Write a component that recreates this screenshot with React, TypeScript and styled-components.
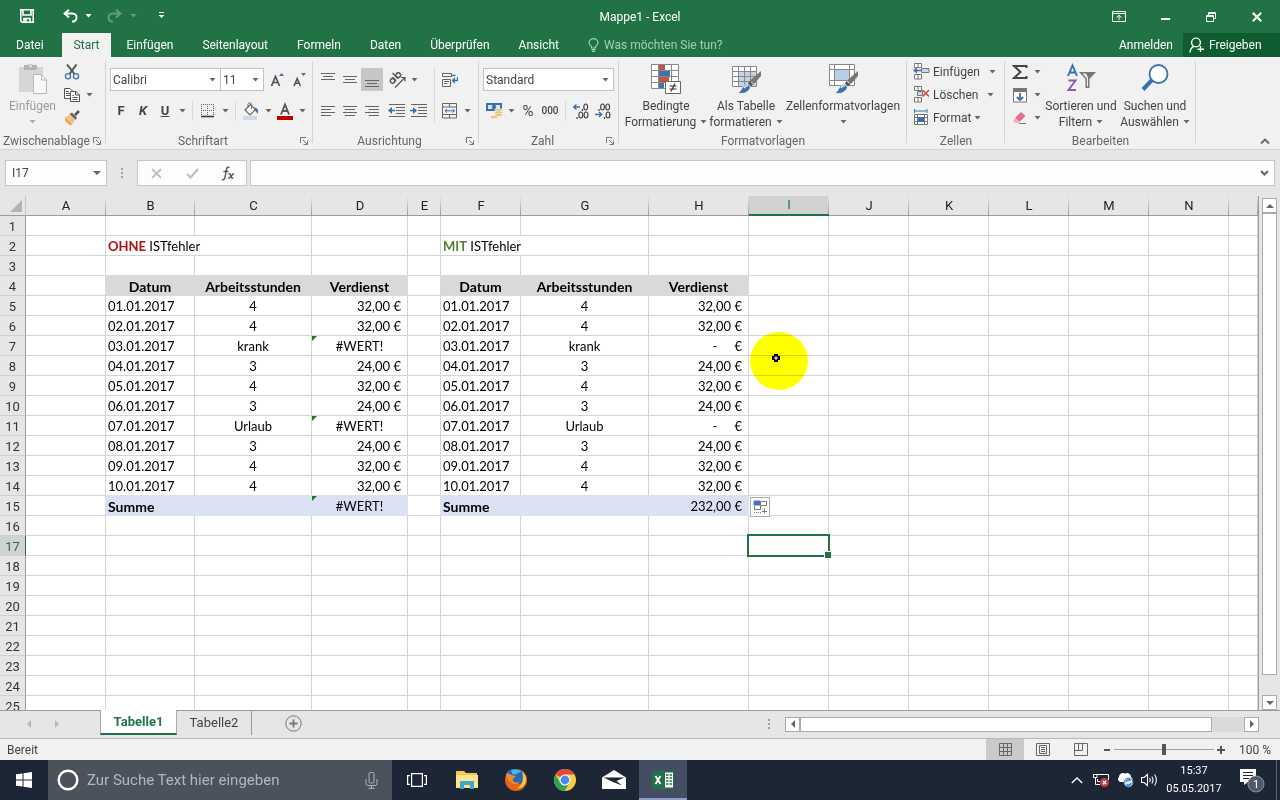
import React from "react";
import styled, { createGlobalStyle, css } from "styled-components";

const UI = 'Roboto, "Noto Sans", sans-serif';
const CELL = 'Lato, "Open Sans", sans-serif';

const Global = createGlobalStyle`
  * { box-sizing: border-box; }
  body { margin: 0; font-family: ${UI}; font-size: 12px; line-height: 16px; color: #444; }
  button, input, select { font: inherit; color: inherit; }
  button { background: none; border: 0; padding: 0; margin: 0; }
  svg { display: block; flex: none; }
`;

const App_ = styled.div`
  display: flex;
  flex-direction: column;
  height: 100vh;
  min-width: 1200px;
  overflow: hidden;
  background: #e6e6e6;
`;

/* ---------- title bar and tabs ---------- */

const TitleBar = styled.header`
  display: grid;
  grid-template-columns: 1fr auto 1fr;
  align-items: center;
  height: 33px;
  flex: none;
  background: #217346;
  color: #fff;
`;
const Title = styled.h1`
  margin: 0;
  font-size: 12px;
  font-weight: 400;
`;
const QuickAccess = styled.div`
  display: flex;
  align-items: center;
  padding: 0 0 2px 16px;
`;
const QuickButton = styled.button<{ $w: number; $dim?: boolean }>`
  display: flex;
  justify-content: center;
  align-items: center;
  width: ${(p) => p.$w}px;
  height: 22px;
  opacity: ${(p) => (p.$dim ? 0.3 : 1)};
`;
const WindowButtons = styled.div`
  display: flex;
  justify-content: flex-end;
`;
const WindowButton = styled.button`
  display: flex;
  align-items: center;
  justify-content: center;
  width: 46px;
  height: 30px;
`;
const TabBar = styled.nav`
  display: flex;
  height: 24px;
  flex: none;
  background: #217346;
  color: #fff;
`;
const Tab = styled.button<{ $active?: boolean; $first?: boolean }>`
  padding: ${(p) => (p.$active ? "0 12px" : "0 14px")};
  margin-right: ${(p) => (p.$first ? 4 : 1)}px;
  ${(p) => p.$first && css`padding-left: 16px;`}
  ${(p) => p.$active && css`background: #f1f1f1; color: #217346;`}
`;
const TellMe = styled.button`
  display: flex;
  align-items: center;
  gap: 5px;
  padding-left: 14px;
  color: #a2cfb4;
`;
const SignIn = styled.button`
  margin-left: auto;
  padding: 0 10px;
`;
const Share = styled.button`
  display: flex;
  align-items: center;
  gap: 4px;
  width: 97px;
  padding-left: 6px;
  background: #0e5c2f;
`;

/* ---------- ribbon ---------- */

const Ribbon = styled.section`
  display: flex;
  height: 93px;
  flex: none;
  background: #f1f1f1;
  border-bottom: 1px solid #d2d2d2;
`;
const GroupBox = styled.div<{ $w: number }>`
  position: relative;
  display: flex;
  flex-direction: column;
  width: ${(p) => p.$w}px;
  &::after {
    content: "";
    position: absolute;
    right: 0;
    top: 4px;
    bottom: 6px;
    width: 1px;
    background: #d4d4d4;
  }
`;
const GroupBody = styled.div<{ $tall?: boolean }>`
  display: flex;
  height: 76px;
  padding: ${(p) => (p.$tall ? "3px 4px 0" : "11px 4px 0")};
`;
const GroupFooter = styled.div`
  display: flex;
  align-items: center;
  height: 16px;
  color: #666;
`;
const GroupName = styled.span`
  flex: 1;
  text-align: center;
  white-space: nowrap;
`;
const Launcher = styled.button`
  width: 13px;
  display: flex;
  justify-content: flex-start;
`;
const Stack = styled.div`
  display: flex;
  flex-direction: column;
  gap: 8px;
`;
const Row = styled.div`
  display: flex;
  align-items: center;
  height: 23px;
`;
const Gap = styled.span<{ $w: number }>`
  width: ${(p) => p.$w}px;
`;
const IconButton = styled.button<{ $w?: number; $active?: boolean }>`
  display: flex;
  align-items: center;
  justify-content: center;
  width: ${(p) => p.$w ?? 22}px;
  height: 23px;
  flex: none;
  background: ${(p) => (p.$active ? "#c6c6c6" : "none")};
`;
const Rule = styled.span<{ $h: number }>`
  width: 1px;
  height: ${(p) => p.$h}px;
  margin: 0 4px;
  background: #d9d9d9;
`;
const Glyph = styled.span<{ $size?: number; $italic?: boolean; $line?: boolean; $weight?: number }>`
  font-size: ${(p) => p.$size ?? 13}px;
  line-height: 18px;
  font-weight: ${(p) => p.$weight ?? 700};
  font-style: ${(p) => (p.$italic ? "italic" : "normal")};
  text-decoration: ${(p) => (p.$line ? "underline" : "none")};
  color: #444;
`;
const Combo = styled.label<{ $w: number }>`
  position: relative;
  display: flex;
  align-items: center;
  width: ${(p) => p.$w}px;
  height: 23px;
  background: #fff;
  border: 1px solid #c3c3c3;
  & + & { border-left: 0; }
  svg { position: absolute; right: 4px; pointer-events: none; }
`;
const Select = styled.select`
  appearance: none;
  width: 100%;
  height: 21px;
  padding: 0 2px;
  border: 0;
  background: none;
`;
const BigButton = styled.button<{ $w: number; $dim?: boolean }>`
  display: flex;
  flex-direction: column;
  align-items: center;
  width: ${(p) => p.$w}px;
  height: 70px;
  padding-top: 3px;
  white-space: nowrap;
  opacity: ${(p) => (p.$dim ? 0.5 : 1)};
  > svg:first-child { margin-bottom: 3px; }
`;
const BigLine = styled.span`
  display: flex;
  align-items: center;
  gap: 4px;
  height: 16px;
`;
const SmallStack = styled.div`
  display: flex;
  flex-direction: column;
`;
const CommandButton = styled.button<{ $gap?: number }>`
  display: flex;
  align-items: center;
  height: 23px;
  gap: 3px;
  > svg:last-child { margin-left: ${(p) => p.$gap ?? 0}px; }
`;
const Collapse = styled.button`
  align-self: flex-end;
  margin-left: auto;
  padding: 0 10px 4px;
`;

/* ---------- formula bar ---------- */

const FormulaBar = styled.section`
  display: flex;
  align-items: center;
  height: 46px;
  padding: 0 5px;
  flex: none;
`;
const Field = styled.label<{ $w?: number }>`
  display: flex;
  align-items: center;
  height: 26px;
  padding-right: 5px;
  background: #fdfdfd;
  border: 1px solid #c6c6c6;
  ${(p) => (p.$w ? css`width: ${p.$w}px;` : css`flex: 1;`)}
`;
const FieldInput = styled.input`
  flex: 1;
  min-width: 0;
  height: 24px;
  padding: 0 6px;
  border: 0;
  outline: 0;
  background: none;
`;
const FormulaTools = styled.div`
  display: flex;
  width: 110px;
  height: 26px;
  margin-right: 3px;
  background: #fdfdfd;
  border: 1px solid #c6c6c6;
`;
const FormulaTool = styled.button`
  display: flex;
  flex: 1;
  align-items: center;
  justify-content: center;
`;
const Dots = styled.span<{ $w: number }>`
  display: flex;
  justify-content: center;
  width: ${(p) => p.$w}px;
`;

/* ---------- sheet ---------- */

const Work = styled.main`
  display: flex;
  flex: 1;
  min-height: 0;
`;
const SheetView = styled.div`
  position: relative;
  flex: 1;
  min-width: 0;
  overflow: hidden;
  background: #fff;
  border-right: 1px solid #9b9b9b;
`;
const Sheet = styled.table`
  width: 100%;
  table-layout: fixed;
  border-collapse: separate;
  border-spacing: 0;
  font-family: ${CELL};
  font-size: 13px;
  line-height: 17px;
  color: #000;
`;
const Corner = styled.th`
  height: 20px;
  padding: 0;
  background: #e6e6e6;
  border-right: 1px solid #c4c4c4;
  border-bottom: 1px solid #9b9b9b;
  svg { margin-left: auto; margin-right: 3px; }
`;
const ColHead = styled.th<{ $sel?: boolean }>`
  height: 20px;
  padding: 0;
  font-family: ${UI};
  font-size: 13px;
  font-weight: 400;
  line-height: 18px;
  color: ${(p) => (p.$sel ? "#217346" : "#222")};
  background: linear-gradient(#e6e6e6, #9b9b9b) right / 1px 100% no-repeat ${(p) => (p.$sel ? "#d2d2d2" : "#e6e6e6")};
  border-bottom: ${(p) => (p.$sel ? "2px solid #217346" : "1px solid #9b9b9b")};
`;
const RowHead = styled.th<{ $sel?: boolean }>`
  height: 20px;
  padding: 2px 0 0;
  font-family: ${UI};
  font-size: 13px;
  font-weight: 400;
  line-height: 17px;
  color: ${(p) => (p.$sel ? "#217346" : "#333")};
  background: ${(p) => (p.$sel ? "#d2d2d2" : "#e6e6e6")};
  border-right: 1px solid ${(p) => (p.$sel ? "#217346" : "#9b9b9b")};
  border-bottom: 1px solid #cfcfcf;
`;
const Cell = styled.td<{ $align?: string; $fill?: string; $bold?: boolean }>`
  position: relative;
  height: 20px;
  padding: 2px ${(p) => (p.$align === "right" ? 6 : 2)}px 0 2px;
  text-align: ${(p) => p.$align ?? "left"};
  font-weight: ${(p) => (p.$bold ? 700 : 400)};
  font-size: ${(p) => (p.$bold ? 14 : 13)}px;
  white-space: pre;
  border-right: 1px solid #d4d4d4;
  border-bottom: 1px solid #d4d4d4;
  ${(p) => p.$fill && css`
    background: ${p.$fill};
    border-color: ${p.$fill};
    box-shadow: -1px -1px 0 ${p.$fill};
  `}
`;
const Strong = styled.strong<{ $c: string }>`
  color: ${(p) => p.$c};
`;
const ErrorMark = styled.span`
  position: absolute;
  left: 0;
  top: 0;
  border-top: 5px solid #1a7a1a;
  border-right: 5px solid transparent;
`;
const Dash = styled.span`
  margin-right: 17px;
`;
const Selection = styled.span`
  position: absolute;
  z-index: 2;
  inset: -2px -2px -2px -2px;
  border: 2px solid #217346;
  &::after {
    content: "";
    position: absolute;
    right: -3px;
    bottom: -3px;
    width: 6px;
    height: 6px;
    background: #217346;
    border: solid #fff;
    border-width: 1px 0 0 1px;
  }
`;
const PasteTag = styled.button`
  position: absolute;
  z-index: 2;
  left: 1px;
  top: 1px;
  padding: 2px;
  background: #fff;
  border: 1px solid #ababab;
`;
const Spot = styled.span`
  position: absolute;
  z-index: 3;
  left: 750px;
  top: 136px;
  width: 58px;
  height: 58px;
  border-radius: 50%;
  background: #ffff00;
  mix-blend-mode: multiply;
`;
const Pointer = styled.span`
  position: absolute;
  z-index: 4;
  left: 772px;
  top: 158px;
`;

const VScroll = styled.div`
  display: flex;
  flex-direction: column;
  width: 21px;
  padding: 2px 3px 0 3px;
`;
const ScrollButton = styled.button`
  display: flex;
  align-items: center;
  justify-content: center;
  width: 15px;
  height: 15px;
  flex: none;
  background: #fff;
  border: 1px solid #ababab;
`;
const VThumb = styled.div`
  flex: 1;
  margin-bottom: 20px;
  background: #fff;
  border: 1px solid #ababab;
`;

/* ---------- bottom bars ---------- */

const SheetTabs = styled.section`
  display: flex;
  align-items: flex-start;
  height: 29px;
  flex: none;
  border-top: 1px solid #9b9b9b;
  border-bottom: 1px solid #b8b8b8;
`;
const TabArrows = styled.div`
  display: flex;
  align-items: center;
  gap: 20px;
  width: 100px;
  height: 26px;
  padding-left: 25px;
`;
const SheetTab = styled.button<{ $active?: boolean }>`
  height: 24px;
  width: ${(p) => (p.$active ? 77 : 75)}px;
  font-size: 13px;
  ${(p) => p.$active
    ? css`margin-top: -1px; height: 25px; font-weight: 700; color: #217346; background: #fff; border: solid #ababab; border-width: 0 1px 0; border-bottom: 2px solid #217346;`
    : css`border-right: 1px solid #9b9b9b;`}
`;
const AddSheet = styled.button`
  padding: 4px 0 0 33px;
`;
const HScroll = styled.div`
  display: flex;
  align-items: center;
  width: 491px;
  height: 26px;
  margin-left: auto;
  margin-right: 21px;
`;
const HTrack = styled.div`
  display: flex;
  flex: 1;
  height: 15px;
  background: #dadada;
`;
const HThumb = styled.div`
  flex: 1;
  margin-right: 32px;
  background: #fff;
  border: 1px solid #ababab;
`;
const StatusBar = styled.footer`
  display: flex;
  align-items: center;
  height: 21px;
  flex: none;
  padding: 0 9px 0 7px;
  background: #f1f1f1;
`;
const Views = styled.div`
  display: flex;
  margin-left: auto;
`;
const ViewButton = styled.button<{ $active?: boolean }>`
  display: flex;
  align-items: center;
  justify-content: center;
  width: 38px;
  height: 21px;
  background: ${(p) => (p.$active ? "#cacaca" : "none")};
`;
const ZoomStep = styled.button`
  padding: 0 3px;
`;
const ZoomRange = styled.input`
  appearance: none;
  width: 100px;
  height: 12px;
  margin: 0;
  background: linear-gradient(#a0a0a0, #a0a0a0) center / 100% 1px no-repeat;
  &::-webkit-slider-thumb {
    appearance: none;
    width: 4px;
    height: 11px;
    background: #555;
  }
`;
const ZoomValue = styled.span`
  width: 43px;
  text-align: right;
`;

const Taskbar = styled.footer`
  display: flex;
  height: 40px;
  flex: none;
  background: #1c2635;
  color: #fff;
`;
const TaskButton = styled.button<{ $w?: number; $active?: boolean }>`
  display: flex;
  align-items: center;
  justify-content: center;
  width: ${(p) => p.$w ?? 49}px;
  height: 40px;
  ${(p) => p.$active && css`background: #434e63; border-bottom: 2px solid #8e9ccb; padding-top: 2px;`}
`;
const SearchBox = styled.label`
  display: flex;
  align-items: center;
  gap: 7px;
  width: 344px;
  padding: 0 14px 0 8px;
  background: #4c525c;
`;
const SearchInput = styled.input`
  flex: 1;
  min-width: 0;
  padding: 0;
  border: 0;
  outline: 0;
  background: none;
  font-size: 15px;
  line-height: 20px;
  &::placeholder { color: #b3b7bd; opacity: 1; }
`;
const Tray = styled.div`
  display: flex;
  align-items: center;
  margin-left: auto;
`;
const Clock = styled.div`
  width: 66px;
  text-align: center;
  font-size: 11px;
  line-height: 18px;
`;
const ShowDesktop = styled.button`
  width: 4px;
  height: 40px;
  border-left: 1px solid #5c6470;
`;

/* ---------- icons ---------- */

const Caret = ({ c = "#666" }: { c?: string }) => (
  <svg width="7" height="4" viewBox="0 0 7 4"><path d="M0.5 0H6.5L3.5 3.5Z" fill={c} /></svg>
);
const CaretButton = ({ label, w = 12 }: { label: string; w?: number }) => (
  <IconButton $w={w} aria-label={label}><Caret /></IconButton>
);
const Tri = ({ d, c = "#666" }: { d: "up" | "down" | "left" | "right"; c?: string }) => {
  const paths = { up: "M4 2L8 6H0Z", down: "M0 2H8L4 6Z", left: "M6 0V8L2 4Z", right: "M2 0L6 4L2 8Z" };
  return <svg width="8" height="8" viewBox="0 0 8 8"><path d={paths[d]} fill={c} /></svg>;
};
const DotsIcon = () => (
  <svg width="2" height="10" viewBox="0 0 2 10" fill="#a0a0a0"><path d="M0 0h2v2H0zM0 4h2v2H0zM0 8h2v2H0z" /></svg>
);
const LauncherIcon = () => (
  <svg width="8" height="8" viewBox="0 0 8 8" fill="none" stroke="#777"><path d="M0.5 6V0.5H6M3 3L7 7M7.5 3.5V7.5H3.5" /></svg>
);
const Lines = ({ rows }: { rows: [number, number, number][] }) => (
  <svg width="16" height="16" viewBox="0 0 16 16" fill="#666" shapeRendering="crispEdges">
    {rows.map(([x, y, w], i) => <rect key={i} x={x} y={y} width={w} height="1" />)}
  </svg>
);
const AlignV = ({ top }: { top: number }) => <Lines rows={[[1, top, 14], [3, top + 3, 10], [1, top + 6, 14]]} />;
const AlignH = ({ x }: { x: number }) => (
  <Lines rows={[[1, 3, 14], [1 + x, 6, 10], [1, 9, 14], [1 + x, 12, 10]]} />
);
const Indent = ({ out }: { out?: boolean }) => (
  <svg width="18" height="14" viewBox="0 0 18 14" fill="#666">
    <path d="M1 0h16v1H1zM8 3h9v1H8zM8 6h9v1H8zM8 9h9v1H8zM1 12h16v1H1z" />
    <path d={out ? "M0 6.5L4 3V5.7H7V7.3H4V10Z" : "M7 6.5L3 3V5.7H0V7.3H3V10Z"} fill="#3b6fae" />
  </svg>
);
const SaveIcon = () => (
  <svg width="14" height="14" viewBox="0 0 14 14" fill="none" stroke="#fff" strokeWidth="1.6">
    <path d="M.8.8H13.2V13.2H2.2L.8 11.8ZM3 1V6H11V1M4 13V9.5H10V13M6 10V13" />
  </svg>
);
const UndoIcon = ({ flip }: { flip?: boolean }) => (
  <svg width="15" height="14" viewBox="0 0 15 14" fill="none" stroke="#fff" strokeWidth="2">
    <g transform={flip ? "translate(15 0) scale(-1 1)" : undefined}>
      <path d="M6 0.8L1.6 4.6L6 8.4M2 4.6H9.5C12.4 4.6 13.8 6.4 13.5 8.8C13.2 11.2 11.5 12.6 9 12.6" />
    </g>
  </svg>
);
const BulbIcon = () => (
  <svg width="11" height="14" viewBox="0 0 11 14" fill="none" stroke="#a2cfb4" strokeWidth="1.2">
    <path d="M3.5 10V8.6C1.8 7.4 1 6.4 1 4.8C1 2.4 3 .7 5.5.7S10 2.4 10 4.8C10 6.4 9.2 7.4 7.5 8.6V10ZM3.5 11.6H7.5M4 13.3H7" />
  </svg>
);
const PersonIcon = () => (
  <svg width="16" height="16" viewBox="0 0 16 16" fill="none" stroke="#fff" strokeWidth="1.4">
    <circle cx="7" cy="5.5" r="4.4" /><path d="M1 15.5C1.2 12.4 2.6 10.4 4.8 9.4M11.5 9V15M8.5 12.2H15" />
  </svg>
);
const PasteIcon = () => (
  <svg width="30" height="32" viewBox="0 0 30 32">
    <path d="M1 4h24v25H1z" fill="#bdbdc2" /><path d="M6 2h4a3 2.5 0 0 1 5 0h4v5H6z" fill="#777" /><circle cx="12.5" cy="3" r="1.2" fill="#f1f1f1" />
    <path d="M15.5 11.5H23.5L28.5 17V30.5H15.5Z" fill="#fff" stroke="#8a7a84" /><path d="M23.5 11.5V17H28.5" fill="none" stroke="#8a7a84" />
  </svg>
);
const CutIcon = () => (
  <svg width="16" height="16" viewBox="0 0 16 16" fill="none">
    <path d="M3 0.5L10.5 10M12.5 0.5L5.5 10" stroke="#555" strokeWidth="2" />
    <circle cx="4" cy="12.3" r="2.6" stroke="#3b6fae" strokeWidth="1.3" /><circle cx="12" cy="12.3" r="2.6" stroke="#3b6fae" strokeWidth="1.3" />
  </svg>
);
const CopyIcon = () => (
  <svg width="16" height="16" viewBox="0 0 16 16" fill="#fff" stroke="#555">
    <path d="M.5 1.5H6L8.5 4V11.5H.5ZM2 4.5H5M2 6.5H6M2 8.5H6" />
    <path d="M6.5 4.5H12L15.5 8V14.5H6.5ZM11.5 4.5V8H15.5M8.5 8.5H10M8.5 10.5H13.5M8.5 12.5H13.5" />
  </svg>
);
const BrushIcon = () => (
  <svg width="16" height="16" viewBox="0 0 16 16">
    <path d="M1 7L9 14L6 15.5L1 11Z" fill="#e3aa5e" /><path d="M1 7.5L5.5 4.5L11 10L8 14Z" fill="#efc386" />
    <path d="M5.5 4L8 2.5L13 7.5L11.5 10Z" fill="#666" /><path d="M11 5L15 1" stroke="#555" strokeWidth="2.5" />
  </svg>
);
const FontSizeIcon = ({ up }: { up?: boolean }) => (
  <svg width="15" height="16" viewBox="0 0 15 16">
    {up
      ? <><path d="M1.5 14L5.5 4.5L9.5 14M3 10.5H8" fill="none" stroke="#555" strokeWidth="1.7" /><path d="M9 4L11.5 1L14 4Z" fill="#3b6fae" /></>
      : <><path d="M2 14L5.2 6.5L8.4 14M3.3 11.3H7.3" fill="none" stroke="#555" strokeWidth="1.6" /><path d="M9 1H14L11.5 4Z" fill="#3b6fae" /></>}
  </svg>
);
const BorderIcon = () => (
  <svg width="14" height="14" viewBox="0 0 14 14" stroke="#666">
    <path d="M0 .5H13M0 6.5H13M.5 0V13M6.5 0V13M12.5 0V13" strokeDasharray="1 1" /><path d="M0 12.5H13" stroke="#333" strokeWidth="1.5" />
  </svg>
);
const BucketIcon = () => (
  <svg width="18" height="18" viewBox="0 0 18 18">
    <path d="M1 14h14v4H1z" fill="#cfd9ea" /><path d="M3 8L8.5 2.5L13.5 7.5L8 13Z" fill="#fff" stroke="#666" strokeWidth="1.2" />
    <path d="M6 6V2.5a1.7 1.7 0 0 1 3.4 0V7" fill="none" stroke="#666" /><path d="M12 5.5C16 6 17 8.5 15.5 12C14.5 10 14 9 13 8.5Z" fill="#3b6fae" />
  </svg>
);
const FontColorIcon = () => (
  <svg width="16" height="18" viewBox="0 0 16 18">
    <path d="M4 12.5L8 2.5L12 12.5M5.5 9H10.5" fill="none" stroke="#555" strokeWidth="1.8" /><path d="M0 14h16v4H0z" fill="#c00000" />
  </svg>
);
const OrientIcon = () => (
  <svg width="17" height="16" viewBox="0 0 17 16" fill="none" stroke="#555" strokeWidth="1.5">
    <g transform="rotate(-45 5 6)"><circle cx="2" cy="7" r="2.3" /><path d="M4.5 4.5V9.5M7.5 1.5V9.5" /><circle cx="10" cy="7" r="2.3" /></g>
    <path d="M6 15.5L15.5 6M12 5.500H16V9.500" strokeWidth="1.2" />
  </svg>
);
const WrapIcon = () => (
  <svg width="16" height="16" viewBox="0 0 16 16" fill="none" stroke="#666">
    <path d="M.5 1.5H9.5V4.5H.5ZM.5 7.5H8.5V14.5H.5ZM2 9.5H7M2 11.5H5.5" /><path d="M10 3.500H13.500M15.500 5V8.500H10.500M13 6L10.500 8.500L13 11" stroke="#3b6fae" strokeWidth="1.3" />
  </svg>
);
const MergeIcon = () => (
  <svg width="16" height="16" viewBox="0 0 16 16" fill="none" stroke="#666">
    <path d="M.5.5H14.5V15H.5ZM.5 4H14.5M.5 11.5H14.5M7.5.5V4M7.5 11.500V15" /><path d="M3 7.8H12.5M5 6L3 7.8L5 9.6M10.5 6L12.5 7.8L10.5 9.6" stroke="#3b6fae" />
  </svg>
);
const MoneyIcon = () => (
  <svg width="17" height="17" viewBox="0 0 17 17">
    <path d="M0 1h16v8H0z" fill="#3b6fae" /><path d="M2 3h12v4H2z" fill="#d9e6f4" /><circle cx="8" cy="5" r="2.2" fill="#3b6fae" />
    <g fill="#e9bf7c" stroke="#f1f1f1" strokeWidth=".6"><ellipse cx="12.5" cy="8" rx="3.8" ry="1.6" /><ellipse cx="12.5" cy="10.5" rx="3.8" ry="1.6" /><ellipse cx="12.5" cy="13" rx="3.8" ry="1.6" /><ellipse cx="8" cy="15" rx="3.8" ry="1.6" /></g>
  </svg>
);
const DecimalIcon = ({ less }: { less?: boolean }) => (
  <svg width="16" height="16" viewBox="0 0 16 16" fill="none" stroke="#444" strokeWidth="1.2">
    {less
      ? <><ellipse cx="7.5" cy="4" rx="1.9" ry="3" /><ellipse cx="12.7" cy="4" rx="1.9" ry="3" /><ellipse cx="13" cy="12" rx="1.9" ry="3" /><path d="M4 6V8M9.5 14V16" /><path d="M0 11.5H6.5M4 9L6.7 11.5L4 14" stroke="#3b6fae" strokeWidth="1.4" /></>
      : <><ellipse cx="12.7" cy="4" rx="1.9" ry="3" /><ellipse cx="7.8" cy="12" rx="1.9" ry="3" /><ellipse cx="13" cy="12" rx="1.9" ry="3" /><path d="M4 14V16M9.5 6V8" /><path d="M0.8 4H7M3.5 1.5L.8 4L3.5 6.5" stroke="#3b6fae" strokeWidth="1.4" /></>}
  </svg>
);
const CondIcon = () => (
  <svg width="30" height="32" viewBox="0 0 30 32">
    <path d="M.5 1.5H27.5V25.5H.5Z" fill="#fff" />
    <path d="M8 1h6v6H8zM8 13h10v6H8z" fill="#c5543c" /><path d="M8 7h11v6H8zM8 19h5v6H8z" fill="#3f72b0" />
    <path d="M.5 1.5H27.5V25.5H.5ZM.5 7.5H27.5M.5 13.5H27.5M.5 19.5H27.5M7.5 1.5V25.5M20.5 1.5V25.5" fill="none" stroke="#888" />
    <path d="M14.5 18.5H29.5V30.5H14.5Z" fill="#fff" stroke="#666" /><path d="M18.5 23H25.5M18.5 26H25.5M24 20.5L20 28.5" stroke="#333" strokeWidth="1.2" />
  </svg>
);
const StyleBrush = () => (
  <>
    <path d="M30 8V13L23 21L19 17.5Z" fill="#777" /><path d="M18.5 18L22 21.5L20 23.5L17 20.5Z" fill="#555" />
    <path d="M7 30C11 28 11 22 16 21C19.5 22 20 25 18 27C15 30.5 11 31 7 30Z" fill="#3b6fae" stroke="#f1f1f1" strokeWidth=".8" /><path d="M13 25C14 23.5 15.5 22.5 17 23" stroke="#dbe7f5" strokeWidth="1.5" fill="none" />
  </>
);
const TableIcon = () => (
  <svg width="30" height="32" viewBox="0 0 30 32">
    <path d="M1.5 3.5H25.5V23.5H1.5Z" fill="#fff" /><path d="M7 9h18v14H7z" fill="#c3d3e6" />
    <path d="M1.5 3.5H25.5V23.5H1.5ZM1.5 8.5H25.5M1.5 13.5H25.5M1.5 18.5H25.5M7.5 3.5V23.5M13.5 3.5V23.5M19.5 3.5V23.5" fill="none" stroke="#888" />
    <StyleBrush />
  </svg>
);
const CellStyleIcon = () => (
  <svg width="30" height="32" viewBox="0 0 30 32">
    <path d="M1.5 1.5H26.5V22.5H1.5Z" fill="#fff" />
    <path d="M1.5 1.5H26.5V22.5H1.5ZM1.5 6.5H26.5M1.5 17.5H26.5M6.5 1.5V22.5M21.5 1.5V22.5" fill="none" stroke="#888" />
    <path d="M7 7h14v10H7z" fill="#b9cfe6" /><StyleBrush />
  </svg>
);
const CellsIcon = ({ kind }: { kind: "insert" | "delete" | "format" }) => (
  <svg width="17" height="17" viewBox="0 0 17 17" fill="#fff" stroke="#777">
    {kind === "format" ? (
      <><path d="M1.5 5.5H14.5V15.5H1.5ZM1.5 8.5H14.5M1.5 12.5H14.5M4.5 5.5V15.5M11.5 5.5V15.5" /><path d="M5 8h6v5H5z" fill="#3b6fae" stroke="none" /><path d="M1.5 0V4M14 0V4M2 2H13.5" stroke="#3b6fae" /></>
    ) : (
      <>
        <path d="M1.5.5H8.5V4.5H1.5ZM5 .5V4.5M1.5 11.5H8.5V16H1.5ZM5 11.5V16" />
        {kind === "insert"
          ? <><path d="M8.5 5.5H16V9.5H8.5Z" fill="#c9d6e8" /><path d="M0 7.5L4 4.5V6.7H8V8.3H4V10.5Z" fill="#3b6fae" stroke="none" /></>
          : <><path d="M4.5 5.5H9.5V9.5H4.5Z" fill="#c9d6e8" /><path d="M9.5 4L16 10.5M16 4L9.5 10.5" stroke="#d0563b" strokeWidth="1.7" /></>}
      </>
    )}
  </svg>
);
const SigmaIcon = () => (
  <svg width="16" height="16" viewBox="0 0 16 16" fill="none" stroke="#444" strokeWidth="2"><path d="M14.5 4V2H2L8.5 8L2 14H14.5V12" /></svg>
);
const FillIcon = () => (
  <svg width="16" height="16" viewBox="0 0 16 16"><path d="M1.5 1.5H14.5V15H1.5Z" fill="#fff" stroke="#777" /><path d="M1 1h14v4H1z" fill="#777" /><path d="M8 6V13M4.8 10L8 13L11.2 10" fill="none" stroke="#3b6fae" strokeWidth="1.8" /></svg>
);
const EraserIcon = () => (
  <svg width="16" height="16" viewBox="0 0 16 16"><path d="M9 2L13.5 6L7.5 12L3 8Z" fill="#e2708c" /><path d="M3 8L7.5 12L6 13H3L1 10.5Z" fill="#efb3c0" /><path d="M7 13.5H14" stroke="#777" /></svg>
);
const SortIcon = () => (
  <svg width="30" height="32" viewBox="0 0 30 32" fill="none">
    <path d="M2 13L6.5 2.5L11 13M3.5 9.5H9.5" stroke="#3b6fae" strokeWidth="1.9" /><path d="M2.5 17.5H9.5L2.5 27H10" stroke="#8b5aa8" strokeWidth="1.9" />
    <path d="M13 9H30L23.5 16V25H19.5V16Z" fill="#777" /><path d="M16.5 10.5H20L22 14.5V23.5H21V15.5Z" fill="#f1f1f1" />
  </svg>
);
const FindIcon = () => (
  <svg width="30" height="32" viewBox="0 0 30 32"><path d="M12 17L3 26.5" stroke="#3b6fae" strokeWidth="4" /><circle cx="18.5" cy="11" r="9" fill="#fff" stroke="#3b6fae" strokeWidth="1.8" /></svg>
);
const WinLogo = () => (
  <svg width="16" height="16" viewBox="0 0 16 16" fill="#fff"><path d="M0 2.3L6.5 1.4V7.5H0ZM7.5 1.2L16 0V7.5H7.5ZM0 8.5H6.5V14.6L0 13.7ZM7.5 8.5H16V16L7.5 14.8Z" /></svg>
);
const MicIcon = () => (
  <svg width="13" height="17" viewBox="0 0 13 17" fill="none" stroke="#b3b7bd"><rect x="4" y=".5" width="5" height="10.5" rx="1.5" /><path d="M1 7V11.5C1 13 2 13.5 3 13.5H10C11 13.5 12 13 12 11.5V7M6.5 13.5V16M3.5 16.3H9.5" /></svg>
);
const TaskViewIcon = () => (
  <svg width="20" height="14" viewBox="0 0 20 14" fill="none" stroke="#fff" strokeWidth="1.2"><path d="M4.600.6H15.4V13.4H4.6ZM3 2.6H.6V11.4H3M17 2.6H19.4V11.4H17" /></svg>
);
const FolderIcon = () => (
  <svg width="22" height="18" viewBox="0 0 22 18"><path d="M0 1C0 .4.5 0 1 0H8L10 2H21V17H0Z" fill="#f3c94f" /><path d="M0 4H22V17H0Z" fill="#fbe38f" /><path d="M4 18V11C4 10.4 4.5 10 5 10H17C17.5 10 18 10.4 18 11V18H14V14H8V18Z" fill="#3fa7cf" /></svg>
);
const FirefoxIcon = () => (
  <svg width="22" height="22" viewBox="0 0 22 22">
    <circle cx="11" cy="11" r="11" fill="#e5641c" />
    <path d="M2 3C3 .5 9 -1 13 .2C18 1.500 20.500 5 20 9C19.500 13.500 16 15.500 13 15C9.500 14.500 7 12.500 7.500 10.500C5 9.500 3.500 7 2 3Z" fill="#2668b5" />
    <path d="M6 2C9 0 14 0 16.500 3C13 3 12 6 8 5.500C7 4.500 6.500 3 6 2Z" fill="#4fb4e6" />
    <path d="M1 4.500C2.500 4 4 4.500 5.500 5.500C7 6.500 9 6.500 10.500 7.200C10 9.200 8 9 7.500 10.500C8 13.500 11 14.500 14.500 12.500C13.500 15.500 10 16 7.500 14.500C4 13 1 9 1 4.500Z" fill="#ef8a2c" />
    <path d="M17 2.500C21 5.500 22.500 11 19.500 15.500C17.500 18.500 14.500 19.500 12 19.500C17 17 19.500 10 17 2.500Z" fill="#fbc63a" />
  </svg>
);
const ChromeIcon = () => (
  <svg width="22" height="22" viewBox="0 0 22 22">
    <circle cx="11" cy="11" r="11" fill="#f9ce3e" /><path d="M11 11L1.5 5.5A11 11 0 0 1 20.5 5.5H11Z" fill="#dd4b3e" />
    <path d="M1.5 5.5A11 11 0 0 0 10.5 22L15.8 13.7L11 11L6.2 13.7Z" fill="#2da252" /><circle cx="11" cy="11" r="5.5" fill="#fff" /><circle cx="11" cy="11" r="4.4" fill="#4a8af4" />
  </svg>
);
const MailIcon = () => (
  <svg width="24" height="20" viewBox="0 0 24 20"><path d="M0 7.500L12 0L24 7.500V19H0Z" fill="#fff" /><path d="M1.500 7.500H22.500L14.500 11L20 15.500L11 12Z" fill="#1c2635" /></svg>
);
const ExcelIcon = () => (
  <svg width="22" height="20" viewBox="0 0 22 20">
    <path d="M12 2H21.5V18H12Z" fill="#fff" stroke="#217346" /><path d="M14 5h2.5M17.5 5H20M14 8h2.5M17.5 8H20M14 11h2.5M17.5 11H20M14 14h2.5M17.5 14H20" stroke="#217346" strokeWidth="1.3" />
    <path d="M0 2L13 0V20L0 18Z" fill="#217346" /><path d="M3.5 6L8.5 14M8.5 6L3.5 14" stroke="#fff" strokeWidth="1.8" />
  </svg>
);
const NetIcon = () => (
  <svg width="17" height="16" viewBox="0 0 17 16" fill="none" stroke="#fff"><path d="M4 2.5H15.5V8M.5 2.5H4V5.5H.5ZM2.5 6V12.5H7M4.5 7V9.5H7" /><circle cx="11.5" cy="10.5" r="4.5" fill="#d13438" stroke="none" /><path d="M9.8 8.8L13.2 12.2M13.2 8.8L9.8 12.2" strokeWidth="1.3" /></svg>
);
const CloudIcon = () => (
  <svg width="17" height="16" viewBox="0 0 17 16"><path d="M3 10A3 3 0 0 1 2 5A4 4 0 0 1 8 1.5A4 4 0 0 1 14 5C16 6 16 9 14 10Z" fill="#fff" /><circle cx="11.5" cy="10.5" r="4.5" fill="#d5e6f6" stroke="#3b77bc" /><path d="M9 10A2.7 2.7 0 0 1 13.5 8.5M14 11A2.7 2.7 0 0 1 9.5 12.5" stroke="#2b66ac" strokeWidth="1.3" fill="none" /></svg>
);
const SoundIcon = () => (
  <svg width="17" height="14" viewBox="0 0 17 14" fill="none" stroke="#fff" strokeWidth="1.1"><path d="M.5 4.5H3L6.5 1.5V12.5L3 9.5H.5ZM8.5 5C9.3 6 9.3 8 8.5 9M10.8 3.5C12.2 5.5 12.2 8.5 10.8 10.5M13.5 1.5C16 4.5 16 9.5 13.5 12.5" /></svg>
);
const NoteIcon = () => (
  <svg width="26" height="26" viewBox="0 0 26 26">
    <path d="M1 2h16v13H9L5 18V15H1Z" fill="#fff" /><path d="M4 5.5H14M4 8.5H14M4 11.5H10" stroke="#1c2635" strokeWidth="1.2" />
    <circle cx="17" cy="17" r="8" fill="#505a6b" stroke="#8b93a0" /><text x="17" y="21" textAnchor="middle" fontSize="11" fill="#fff">1</text>
  </svg>
);

/* ---------- data ---------- */

const columns: [string, number | null][] = [
  ["A", 80], ["B", 89], ["C", 117], ["D", 96], ["E", 33], ["F", 80], ["G", 128], ["H", 100],
  ["I", 80], ["J", 80], ["K", 80], ["L", 80], ["M", 80], ["N", 80], ["", null],
];
const days: [string, string, string, string][] = [
  ["01.01.2017", "4", "32,00 €", "32,00 €"],
  ["02.01.2017", "4", "32,00 €", "32,00 €"],
  ["03.01.2017", "krank", "#WERT!", "-"],
  ["04.01.2017", "3", "24,00 €", "24,00 €"],
  ["05.01.2017", "4", "32,00 €", "32,00 €"],
  ["06.01.2017", "3", "24,00 €", "24,00 €"],
  ["07.01.2017", "Urlaub", "#WERT!", "-"],
  ["08.01.2017", "3", "24,00 €", "24,00 €"],
  ["09.01.2017", "4", "32,00 €", "32,00 €"],
  ["10.01.2017", "4", "32,00 €", "32,00 €"],
];

const HEAD = "#d9d9d9";
const SUM = "#d9e1f2";

const Amount = ({ value, fill }: { value: string; fill?: string }) =>
  value === "#WERT!" ? (
    <Cell $align="center" $fill={fill}><ErrorMark />{value}</Cell>
  ) : value === "-" ? (
    <Cell $align="right"><Dash>-</Dash>€</Cell>
  ) : (
    <Cell $align="right" $fill={fill}>{value}</Cell>
  );

const Block = ({ row, mit }: { row: number; mit: boolean }) => {
  if (row === 2)
    return (
      <>
        <Cell colSpan={2}><Strong $c={mit ? "#548235" : "#b01010"}>{mit ? "MIT" : "OHNE"}</Strong> ISTfehler</Cell>
        <Cell />
      </>
    );
  if (row === 4)
    return <>{["Datum", "Arbeitsstunden", "Verdienst"].map((t) => <Cell key={t} $align="center" $bold $fill={HEAD}>{t}</Cell>)}</>;
  if (row >= 5 && row <= 14) {
    const [date, hours, without, withFix] = days[row - 5];
    return <><Cell>{date}</Cell><Cell $align="center">{hours}</Cell><Amount value={mit ? withFix : without} /></>;
  }
  if (row === 15)
    return <><Cell $bold $fill={SUM}>Summe</Cell><Cell $fill={SUM} /><Amount fill={SUM} value={mit ? "232,00 €" : "#WERT!"} /></>;
  return <><Cell /><Cell /><Cell /></>;
};

const Group = ({ name, w, tall, launcher, children }: { name: string; w: number; tall?: boolean; launcher?: boolean; children: React.ReactNode }) => (
  <GroupBox $w={w}>
    <GroupBody $tall={tall}>{children}</GroupBody>
    <GroupFooter>
      <GroupName>{name}</GroupName>
      {launcher && <Launcher aria-label={`${name} Optionen`}><LauncherIcon /></Launcher>}
    </GroupFooter>
  </GroupBox>
);

export default function App() {
  return (
    <App_>
      <Global />
      <TitleBar>
        <QuickAccess>
          <QuickButton $w={22} aria-label="Speichern"><SaveIcon /></QuickButton>
          <Gap $w={21} />
          <QuickButton $w={22} aria-label="Rückgängig"><UndoIcon /></QuickButton>
          <QuickButton $w={14} aria-label="Rückgängig-Liste"><Caret c="#fff" /></QuickButton>
          <Gap $w={8} />
          <QuickButton $w={22} $dim aria-label="Wiederholen"><UndoIcon flip /></QuickButton>
          <QuickButton $w={16} $dim aria-label="Wiederholen-Liste"><Caret c="#fff" /></QuickButton>
          <Gap $w={12} />
          <QuickButton $w={16} aria-label="Symbolleiste anpassen">
            <svg width="7" height="7" viewBox="0 0 7 7" fill="#fff"><path d="M1 0h5v1H1zM.5 3H6.5L3.5 6Z" /></svg>
          </QuickButton>
        </QuickAccess>
        <Title>Mappe1 - Excel</Title>
        <WindowButtons>
          <WindowButton aria-label="Menüband-Anzeigeoptionen">
            <svg width="14" height="11" viewBox="0 0 14 11" fill="none" stroke="#fff"><path d="M.5.5H13.5V10.5H.5ZM.5 2.5H13.5M7 9V4.5M4.5 6.5L7 4.3L9.5 6.5" /></svg>
          </WindowButton>
          <WindowButton aria-label="Minimieren">
            <svg width="9" height="8" viewBox="0 0 9 8" fill="#fff"><path d="M0 5h9v2H0z" /></svg>
          </WindowButton>
          <WindowButton aria-label="Verkleinern">
            <svg width="10" height="10" viewBox="0 0 10 10" fill="none" stroke="#fff"><path d="M.5 3.5H7.5V9.5H.5ZM.5 4.5H7.5M2.5 3V.5H9.5V6.5H8M2.5 1.5H9.5" /></svg>
          </WindowButton>
          <WindowButton aria-label="Schließen">
            <svg width="10" height="10" viewBox="0 0 10 10" stroke="#fff" strokeWidth="2"><path d="M.8.8L9.2 9.2M9.200.8L.8 9.2" /></svg>
          </WindowButton>
        </WindowButtons>
      </TitleBar>
      <TabBar>
        <Tab $first>Datei</Tab>
        <Tab $active>Start</Tab>
        {["Einfügen", "Seitenlayout", "Formeln", "Daten", "Überprüfen", "Ansicht"].map((t) => <Tab key={t}>{t}</Tab>)}
        <TellMe><BulbIcon />Was möchten Sie tun?</TellMe>
        <SignIn>Anmelden</SignIn>
        <Share><PersonIcon />Freigeben</Share>
      </TabBar>

      <Ribbon>
        <Group name="Zwischenablage" w={106} tall launcher>
          <BigButton $w={57} $dim><PasteIcon /><BigLine>Einfügen</BigLine><BigLine><Caret /></BigLine></BigButton>
          <SmallStack>
            <IconButton aria-label="Ausschneiden"><CutIcon /></IconButton>
            <Row>
              <IconButton aria-label="Kopieren"><CopyIcon /></IconButton>
              <CaretButton label="Kopieroptionen" />
            </Row>
            <IconButton aria-label="Format übertragen"><BrushIcon /></IconButton>
          </SmallStack>
        </Group>

        <Group name="Schriftart" w={207} launcher>
          <Stack>
            <Row>
              <Combo $w={111}><Select aria-label="Schriftart"><option>Calibri</option></Select><Caret /></Combo>
              <Combo $w={43}><Select aria-label="Schriftgrad"><option>11</option></Select><Caret /></Combo>
              <Gap $w={2} />
              <IconButton aria-label="Schrift vergrößern"><FontSizeIcon up /></IconButton>
              <IconButton aria-label="Schrift verkleinern"><FontSizeIcon /></IconButton>
            </Row>
            <Row>
              <IconButton><Glyph>F</Glyph></IconButton>
              <IconButton><Glyph $italic>K</Glyph></IconButton>
              <IconButton><Glyph $line>U</Glyph></IconButton>
              <CaretButton label="Unterstreichungsarten" />
              <Rule $h={20} />
              <IconButton aria-label="Rahmen"><BorderIcon /></IconButton>
              <CaretButton label="Rahmenarten" />
              <Rule $h={20} />
              <IconButton aria-label="Füllfarbe"><BucketIcon /></IconButton>
              <CaretButton label="Füllfarben" />
              <IconButton aria-label="Schriftfarbe"><FontColorIcon /></IconButton>
              <CaretButton label="Schriftfarben" />
            </Row>
          </Stack>
        </Group>

        <Group name="Ausrichtung" w={166} launcher>
          <Stack>
            <Row>
              <IconButton aria-label="Oben"><AlignV top={1} /></IconButton>
              <IconButton aria-label="Mitte"><AlignV top={4} /></IconButton>
              <IconButton $active aria-label="Unten"><AlignV top={8} /></IconButton>
              <Gap $w={3} />
              <IconButton aria-label="Drehung"><OrientIcon /></IconButton>
              <CaretButton label="Drehungsarten" />
            </Row>
            <Row>
              <IconButton aria-label="Linksbündig"><AlignH x={0} /></IconButton>
              <IconButton aria-label="Zentriert"><AlignH x={2} /></IconButton>
              <IconButton aria-label="Rechtsbündig"><AlignH x={4} /></IconButton>
              <Gap $w={3} />
              <IconButton aria-label="Einzug verkleinern"><Indent out /></IconButton>
              <IconButton aria-label="Einzug vergrößern"><Indent /></IconButton>
            </Row>
          </Stack>
          <Rule $h={54} />
          <Stack>
            <IconButton aria-label="Zeilenumbruch"><WrapIcon /></IconButton>
            <Row>
              <IconButton aria-label="Verbinden"><MergeIcon /></IconButton>
              <CaretButton label="Verbindungsarten" />
            </Row>
          </Stack>
        </Group>

        <Group name="Zahl" w={140} launcher>
          <Stack>
            <Combo $w={131}><Select aria-label="Zahlenformat"><option>Standard</option></Select><Caret /></Combo>
            <Row>
              <IconButton aria-label="Buchhaltungsformat"><MoneyIcon /></IconButton>
              <CaretButton label="Währungen" />
              <IconButton><Glyph $size={15} $weight={400}>%</Glyph></IconButton>
              <IconButton><Glyph $size={10} $weight={500}>000</Glyph></IconButton>
              <Rule $h={20} />
              <IconButton aria-label="Dezimalstelle hinzufügen"><DecimalIcon /></IconButton>
              <IconButton aria-label="Dezimalstelle löschen"><DecimalIcon less /></IconButton>
            </Row>
          </Stack>
        </Group>

        <Group name="Formatvorlagen" w={288} tall>
          <BigButton $w={86}><CondIcon /><BigLine>Bedingte</BigLine><BigLine>Formatierung <Caret /></BigLine></BigButton>
          <BigButton $w={74}><TableIcon /><BigLine>Als Tabelle</BigLine><BigLine>formatieren <Caret /></BigLine></BigButton>
          <BigButton $w={120}><CellStyleIcon /><BigLine>Zellenformatvorlagen</BigLine><BigLine><Caret /></BigLine></BigButton>
        </Group>

        <Group name="Zellen" w={98} tall>
          <Gap $w={2} />
          <SmallStack>
            <CommandButton $gap={6}><CellsIcon kind="insert" />Einfügen<Caret /></CommandButton>
            <CommandButton $gap={6}><CellsIcon kind="delete" />Löschen<Caret /></CommandButton>
            <CommandButton><CellsIcon kind="format" />Format<Caret /></CommandButton>
          </SmallStack>
        </Group>

        <Group name="Bearbeiten" w={191} tall>
          <SmallStack>
            <Row><IconButton aria-label="Summe"><SigmaIcon /></IconButton><CaretButton label="Funktionen" /></Row>
            <Row><IconButton aria-label="Ausfüllen"><FillIcon /></IconButton><CaretButton label="Füllrichtung" /></Row>
            <Row><IconButton aria-label="Löschen"><EraserIcon /></IconButton><CaretButton label="Löschoptionen" /></Row>
          </SmallStack>
          <BigButton $w={76}><SortIcon /><BigLine>Sortieren und</BigLine><BigLine>Filtern <Caret /></BigLine></BigButton>
          <BigButton $w={72}><FindIcon /><BigLine>Suchen und</BigLine><BigLine>Auswählen <Caret /></BigLine></BigButton>
        </Group>
        <Collapse aria-label="Menüband reduzieren">
          <svg width="10" height="7" viewBox="0 0 10 7" fill="none" stroke="#666" strokeWidth="1.8"><path d="M1 5.5L5 1.5L9 5.5" /></svg>
        </Collapse>
      </Ribbon>

      <FormulaBar>
        <Field $w={102}><FieldInput aria-label="Namenfeld" defaultValue="I17" /><Tri d="down" /></Field>
        <Dots $w={30}><DotsIcon /></Dots>
        <FormulaTools>
          <FormulaTool aria-label="Abbrechen"><svg width="11" height="11" viewBox="0 0 11 11" stroke="#c0c0c0" strokeWidth="1.8"><path d="M1 1L10 10M10 1L1 10" /></svg></FormulaTool>
          <FormulaTool aria-label="Eingeben"><svg width="13" height="11" viewBox="0 0 13 11" fill="none" stroke="#c0c0c0" strokeWidth="2.2"><path d="M1 6L4.5 9.5L12 1" /></svg></FormulaTool>
          <FormulaTool aria-label="Funktion einfügen">
            <svg width="14" height="15" viewBox="0 0 14 15" fill="none" stroke="#555" strokeWidth="1.4"><path d="M8.5 1.5C6.500.5 5.6 2 5.3 4L4 11.5C3.6 13.5 2.5 14.2 1 13.5M2.5 5.5H7.5M7.5 8C9 7.3 9.5 8 10 10S11 12.5 12.5 12M13 7.8C11.5 7.5 9 12.8 7 12.2" /></svg>
          </FormulaTool>
        </FormulaTools>
        <Field>
          <FieldInput aria-label="Bearbeitungsleiste" />
          <svg width="9" height="6" viewBox="0 0 9 6" fill="none" stroke="#666" strokeWidth="2"><path d="M1 1L4.5 4.5L8 1" /></svg>
        </Field>
      </FormulaBar>

      <Work>
        <SheetView>
          <Sheet>
            <colgroup>
              <col width={26} />
              {columns.map(([n, w]) => <col key={n} width={w ?? undefined} />)}
            </colgroup>
            <thead>
              <tr>
                <Corner aria-label="Alles markieren"><svg width="12" height="12" viewBox="0 0 12 12"><path d="M12 0V12H0Z" fill="#b4b4b4" /></svg></Corner>
                {columns.map(([n]) => <ColHead key={n} $sel={n === "I"}>{n}</ColHead>)}
              </tr>
            </thead>
            <tbody>
              {Array.from({ length: 25 }, (_, i) => i + 1).map((row) => (
                <tr key={row}>
                  <RowHead $sel={row === 17}>{row}</RowHead>
                  <Cell />
                  <Block row={row} mit={false} />
                  <Cell />
                  <Block row={row} mit />
                  <Cell>
                    {row === 17 && <Selection />}
                    {row === 15 && (
                      <PasteTag aria-label="Auto-Ausfülloptionen">
                        <svg width="14" height="14" viewBox="0 0 14 14" fill="none" stroke="#777"><path d="M1 1h6v4H1z" fill="#4472c4" stroke="#4472c4" /><path d="M7.5 1.5H13.5V5.5H7.5ZM1.5 6V9.5H7.5V6M11.5 8.5V13.5M9 11.5H14" /><path d="M1 12.5H8" strokeDasharray="1 1" /></svg>
                      </PasteTag>
                    )}
                  </Cell>
                  {["J", "K", "L", "M", "N", "O"].map((n) => <Cell key={n} />)}
                </tr>
              ))}
            </tbody>
          </Sheet>
          <Spot />
          <Pointer>
            <svg width="8" height="8" viewBox="0 0 8 8"><path d="M2 0h4v2h2v4H6v2H2V6H0V2h2z" fill="#000" /><path d="M3.5 2h1v1.500H6v1H4.500V6h-1V4.500H2v-1h1.500z" fill="#fff" /></svg>
          </Pointer>
        </SheetView>
        <VScroll>
          <ScrollButton aria-label="Nach oben"><Tri d="up" /></ScrollButton>
          <VThumb />
          <ScrollButton aria-label="Nach unten"><Tri d="down" /></ScrollButton>
        </VScroll>
      </Work>

      <SheetTabs>
        <TabArrows><Tri d="left" c="#b8b8b8" /><Tri d="right" c="#b8b8b8" /></TabArrows>
        <SheetTab $active>Tabelle1</SheetTab>
        <SheetTab>Tabelle2</SheetTab>
        <AddSheet aria-label="Neues Blatt">
          <svg width="17" height="17" viewBox="0 0 17 17" fill="none" stroke="#777"><circle cx="8.5" cy="8.5" r="7.7" /><path d="M8.5 4.5V12.5M4.5 8.5H12.5" strokeWidth="1.8" /></svg>
        </AddSheet>
        <HScroll>
          <DotsIcon /><Gap $w={15} />
          <ScrollButton aria-label="Nach links"><Tri d="left" /></ScrollButton>
          <HTrack><HThumb /></HTrack>
          <ScrollButton aria-label="Nach rechts"><Tri d="right" /></ScrollButton>
        </HScroll>
      </SheetTabs>

      <StatusBar>
        Bereit
        <Views>
          <ViewButton $active aria-label="Normal"><svg width="13" height="13" viewBox="0 0 13 13" fill="none" stroke="#666"><path d="M.5.5H12.5V12.5H.5ZM.5 4.5H12.5M.5 8.5H12.5M4.500.5V12.5M8.500.5V12.5" /></svg></ViewButton>
          <ViewButton aria-label="Seitenlayout"><svg width="14" height="13" viewBox="0 0 14 13" fill="none" stroke="#666"><path d="M.5.5H13.5V12.5H.5ZM3.5 2.5H10.5V10.5H3.5ZM5 4.5H9M5 6.5H9M5 8.5H9" /></svg></ViewButton>
          <ViewButton aria-label="Umbruchvorschau"><svg width="14" height="13" viewBox="0 0 14 13" fill="none" stroke="#666"><path d="M.5.5H13.5V12.5H.5ZM.5 7.5H8.5V.5M4.500.5V7.5" /></svg></ViewButton>
        </Views>
        <ZoomStep aria-label="Verkleinern"><svg width="8" height="8" viewBox="0 0 8 8" fill="#555"><path d="M1 3h6v2H1z" /></svg></ZoomStep>
        <ZoomRange type="range" min={0} max={100} defaultValue={50} aria-label="Zoom" />
        <ZoomStep aria-label="Vergrößern"><svg width="8" height="8" viewBox="0 0 8 8" fill="#555"><path d="M0 3h8v2H0zM3 0h2v8H3z" /></svg></ZoomStep>
        <ZoomValue>100 %</ZoomValue>
      </StatusBar>

      <Taskbar>
        <TaskButton $w={48} aria-label="Start"><WinLogo /></TaskButton>
        <SearchBox>
          <svg width="24" height="24" viewBox="0 0 24 24"><circle cx="12" cy="12" r="9.3" fill="none" stroke="#fff" strokeWidth="2.4" /></svg>
          <SearchInput type="text" placeholder="Zur Suche Text hier eingeben" aria-label="Suche" />
          <MicIcon />
        </SearchBox>
        <TaskButton aria-label="Taskansicht"><TaskViewIcon /></TaskButton>
        <TaskButton $w={51} aria-label="Explorer"><FolderIcon /></TaskButton>
        <TaskButton $w={48} aria-label="Firefox"><FirefoxIcon /></TaskButton>
        <TaskButton aria-label="Chrome"><ChromeIcon /></TaskButton>
        <TaskButton $w={50} aria-label="Mail"><MailIcon /></TaskButton>
        <TaskButton $w={48} $active aria-label="Excel"><ExcelIcon /></TaskButton>
        <Tray>
          <TaskButton $w={24} aria-label="Ausgeblendete Symbole"><svg width="12" height="7" viewBox="0 0 12 7" fill="none" stroke="#fff" strokeWidth="1.3"><path d="M.8 6L6 1L11.2 6" /></svg></TaskButton>
          <TaskButton $w={24} aria-label="Netzwerk"><NetIcon /></TaskButton>
          <TaskButton $w={24} aria-label="OneDrive"><CloudIcon /></TaskButton>
          <TaskButton $w={24} aria-label="Lautstärke"><SoundIcon /></TaskButton>
          <Clock><div>15:37</div><div>05.05.2017</div></Clock>
          <TaskButton $w={49} aria-label="Info-Center"><NoteIcon /></TaskButton>
          <ShowDesktop aria-label="Desktop anzeigen" />
        </Tray>
      </Taskbar>
    </App_>
  );
}
